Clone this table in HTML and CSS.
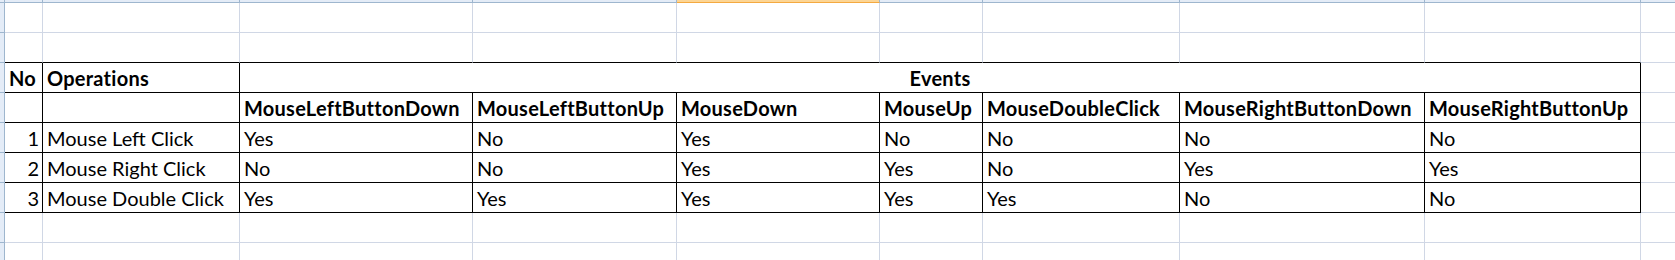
FILE: index.html
```html
<!DOCTYPE html>
<html lang="en">
<head>
    <meta charset="UTF-8">
    <meta name="viewport" content="width=device-width, initial-scale=1.0">
    <title>Mouse Events - Sheet1</title>
    <link rel="stylesheet" href="styles.css">
</head>
<body>
    <div class="sheet">
        <!-- column header strip -->
        <div class="corner"></div>
        <div class="hd"></div><div class="hd"></div><div class="hd"></div><div class="hd"></div>
        <div class="hd sel"></div>
        <div class="hd"></div><div class="hd"></div><div class="hd"></div><div class="hd"></div><div class="hd"></div>

        <!-- row 1 -->
        <div class="rh"></div>
        <div class="c"></div><div class="c"></div><div class="c"></div><div class="c"></div><div class="c"></div>
        <div class="c"></div><div class="c"></div><div class="c"></div><div class="c"></div><div class="c"></div>

        <!-- row 2 (sits on top of the table) -->
        <div class="rh"></div>
        <div class="c top"></div><div class="c top"></div><div class="c top"></div><div class="c top"></div><div class="c top"></div>
        <div class="c top"></div><div class="c top"></div><div class="c top"></div><div class="c top"></div><div class="c"></div>

        <!-- row 3 -->
        <div class="rh"></div>
        <div class="c t b">No</div>
        <div class="c t b">Operations</div>
        <div class="c t b events">Events</div>
        <div class="c"></div>

        <!-- row 4 -->
        <div class="rh"></div>
        <div class="c t"></div>
        <div class="c t"></div>
        <div class="c t b">MouseLeftButtonDown</div>
        <div class="c t b">MouseLeftButtonUp</div>
        <div class="c t b">MouseDown</div>
        <div class="c t b">MouseUp</div>
        <div class="c t b">MouseDoubleClick</div>
        <div class="c t b">MouseRightButtonDown</div>
        <div class="c t b">MouseRightButtonUp</div>
        <div class="c"></div>

        <!-- row 5 -->
        <div class="rh"></div>
        <div class="c t num">1</div>
        <div class="c t">Mouse Left Click</div>
        <div class="c t">Yes</div>
        <div class="c t">No</div>
        <div class="c t">Yes</div>
        <div class="c t">No</div>
        <div class="c t">No</div>
        <div class="c t">No</div>
        <div class="c t">No</div>
        <div class="c"></div>

        <!-- row 6 -->
        <div class="rh"></div>
        <div class="c t num">2</div>
        <div class="c t">Mouse Right Click</div>
        <div class="c t">No</div>
        <div class="c t">No</div>
        <div class="c t">Yes</div>
        <div class="c t">Yes</div>
        <div class="c t">No</div>
        <div class="c t">Yes</div>
        <div class="c t">Yes</div>
        <div class="c"></div>

        <!-- row 7 -->
        <div class="rh"></div>
        <div class="c t num">3</div>
        <div class="c t">Mouse Double Click</div>
        <div class="c t">Yes</div>
        <div class="c t">Yes</div>
        <div class="c t">Yes</div>
        <div class="c t">Yes</div>
        <div class="c t">Yes</div>
        <div class="c t">No</div>
        <div class="c t">No</div>
        <div class="c"></div>

        <!-- row 8 -->
        <div class="rh"></div>
        <div class="c"></div><div class="c"></div><div class="c"></div><div class="c"></div><div class="c"></div>
        <div class="c"></div><div class="c"></div><div class="c"></div><div class="c"></div><div class="c"></div>

        <!-- row 9 -->
        <div class="rh"></div>
        <div class="c"></div><div class="c"></div><div class="c"></div><div class="c"></div><div class="c"></div>
        <div class="c"></div><div class="c"></div><div class="c"></div><div class="c"></div><div class="c"></div>
    </div>
</body>
</html>
```

FILE: styles.css
```css
body, html {
    margin: 0;
    padding: 0;
    overflow: hidden;
    height: 100vh;
    background-color: #fff;
    color: #000;
    font-family: Lato, "Open Sans", sans-serif;
    font-size: 20px;
}

.sheet {
    display: grid;
    grid-template-columns: 5px 38px 197px 233px 204px 203px 103px 197px 245px 216px 200px;
    grid-template-rows: 3px repeat(9, 30px);
    width: 100%;
    height: 100%;
    overflow: hidden;
}

/* header strips */
.corner, .hd, .rh {
    background-color: #e4ecf7;
    border-right: 1px solid #9eb6ce;
    border-bottom: 1px solid #9eb6ce;
    box-sizing: border-box;
}

.hd.sel {
    background-color: #fcd595;
    border-bottom-color: #f4a940;
}

/* cells */
.c {
    display: flex;
    align-items: flex-end;
    box-sizing: border-box;
    border-right: 1px solid #d0d7e5;
    border-bottom: 1px solid #d0d7e5;
    padding: 0 4px 3px 4px;
    line-height: 22px;
    white-space: nowrap;
    overflow: hidden;
}

.c.top { border-bottom-color: #000; }
.c.t { border-color: #000; }
.c.b { font-weight: bold; letter-spacing: 0.25px; }
.c.num { justify-content: flex-end; padding-right: 3px; }

.events {
    grid-column: span 7;
    justify-content: center;
}
```
